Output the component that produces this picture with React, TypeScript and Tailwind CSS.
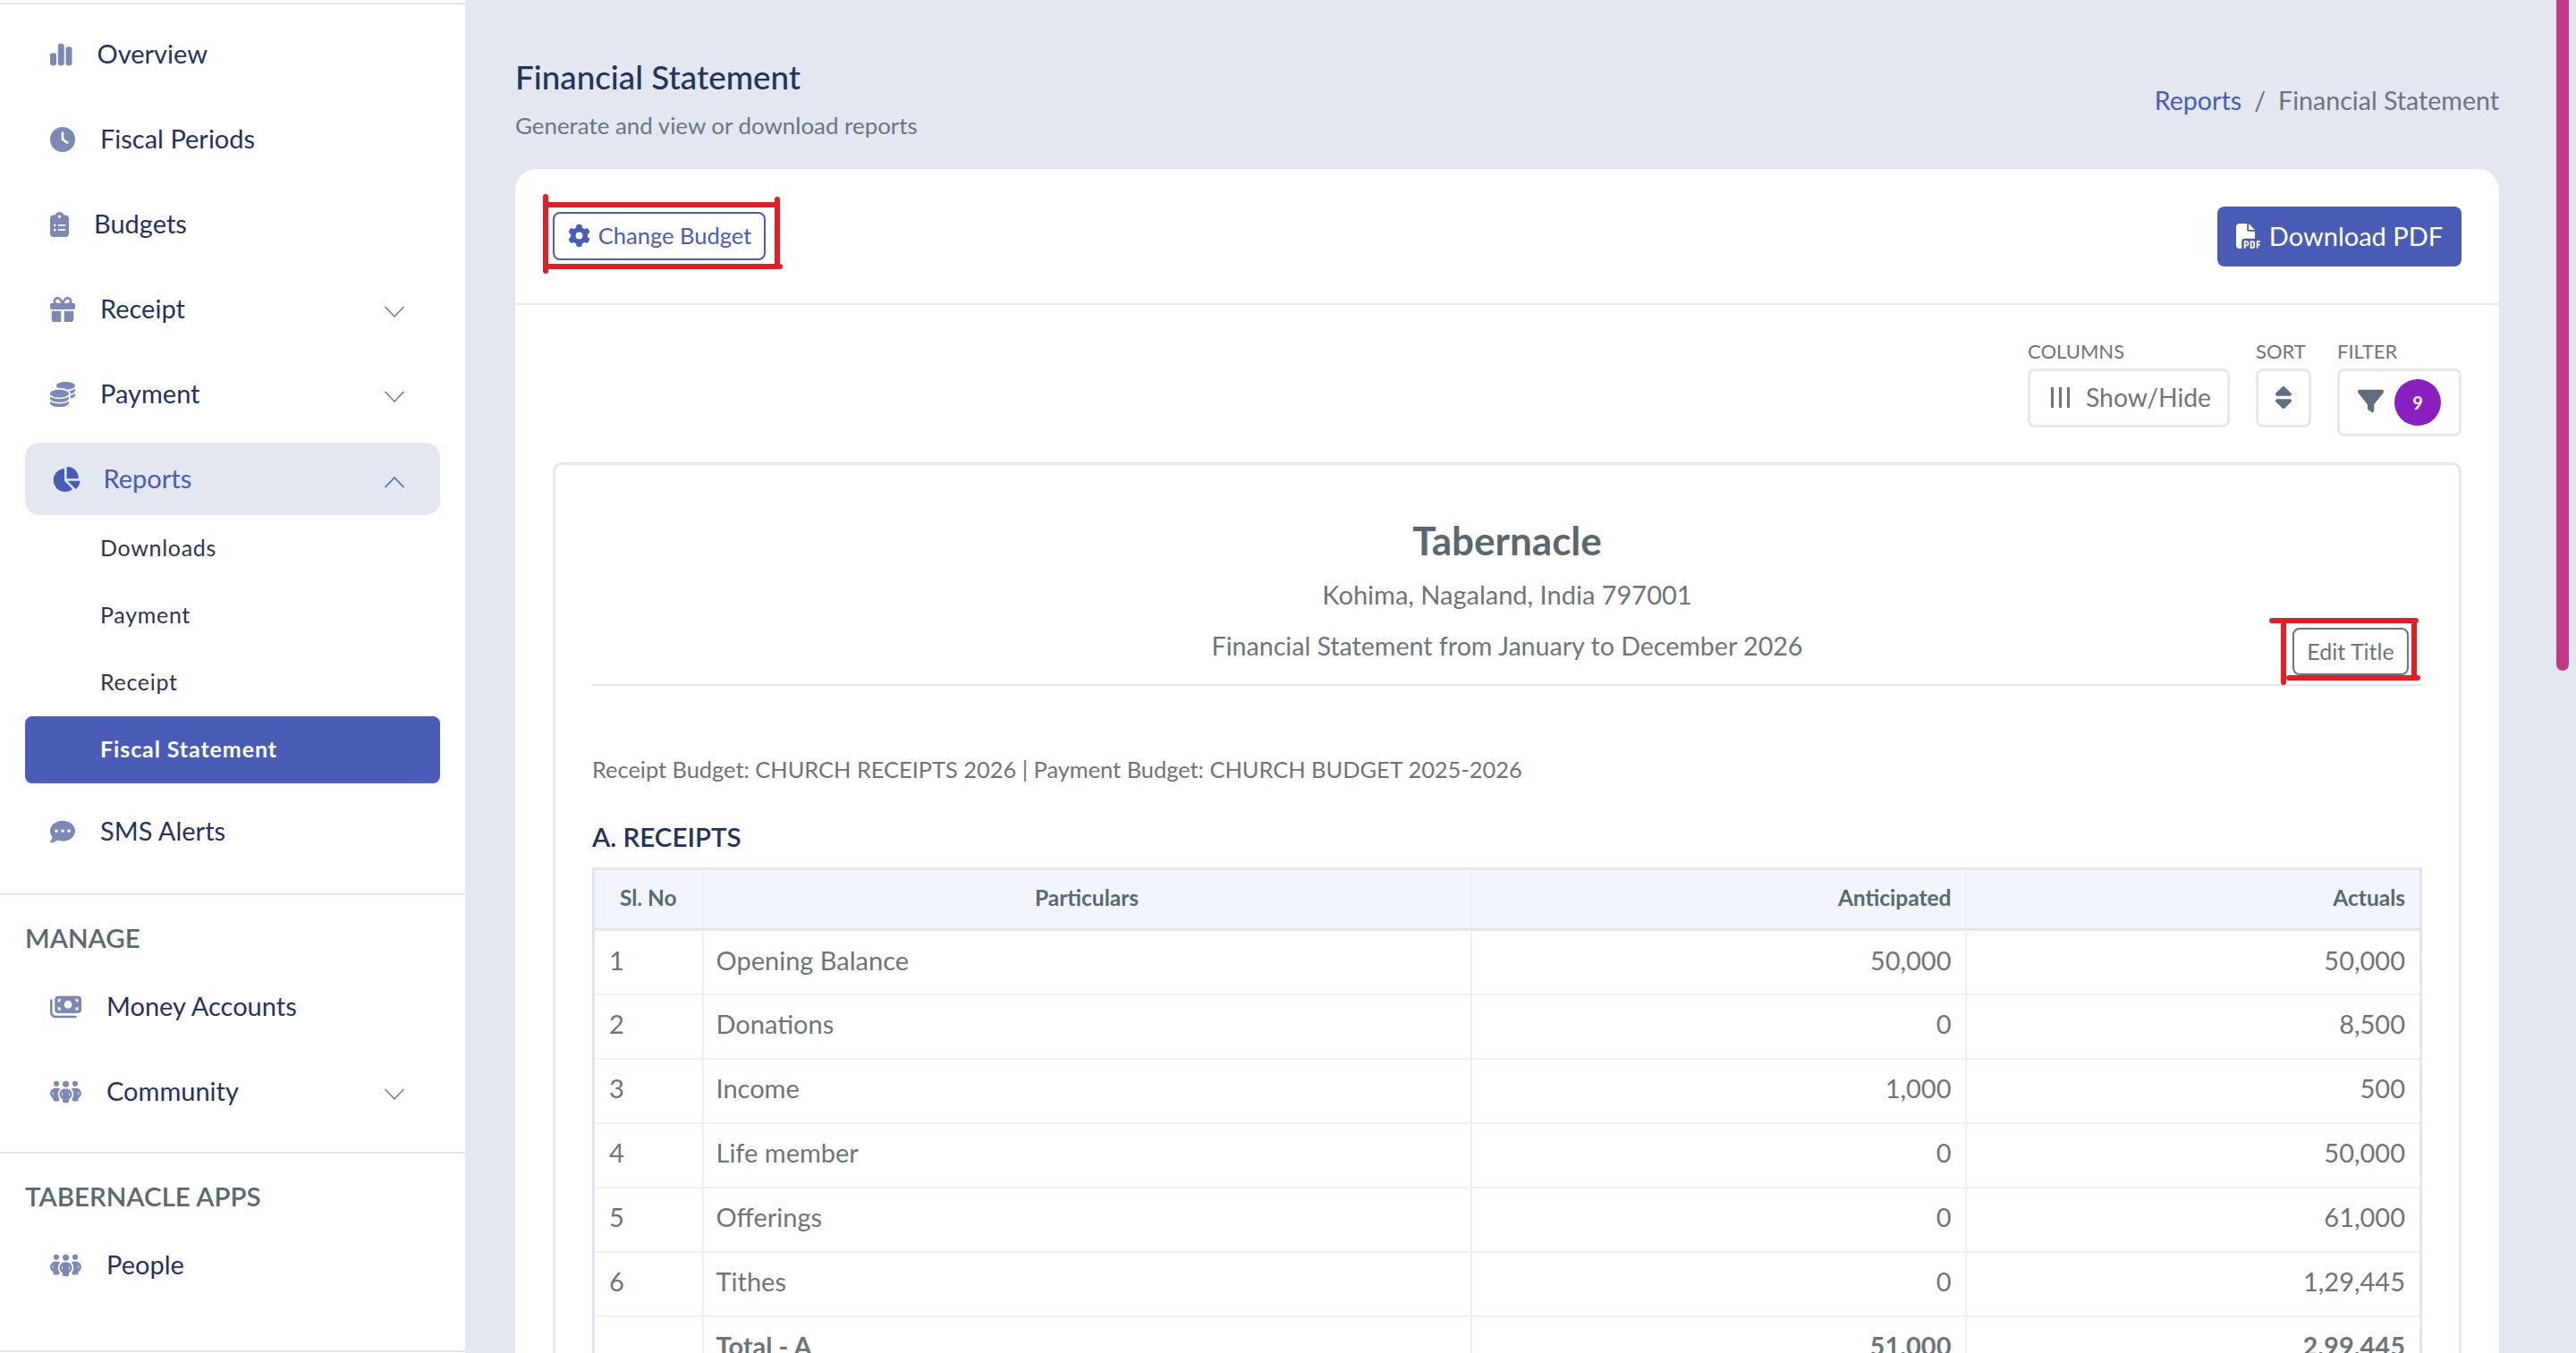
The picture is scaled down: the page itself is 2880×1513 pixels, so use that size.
import React from "react";
import { FaChartSimple, FaClock, FaClipboardList, FaGift, FaCoins, FaChartPie, FaCommentDots, FaMoneyBills, FaPeopleGroup, FaGear, FaFilePdf, FaFilter, FaSort } from "react-icons/fa6";

const Chevron = ({ up = false, color = "#6f7680" }: { up?: boolean; color?: string }) => (
  <svg width="24" height="14" viewBox="0 0 24 14" fill="none" className="mt-[7px]">
    <path d={up ? "M1.5 13 L12 2 L22.5 13" : "M1.5 1 L12 12 L22.5 1"} stroke={color} strokeWidth="1.5" />
  </svg>
);

type Item = { icon: React.ComponentType<{ className?: string }>; label: string; chevron?: boolean; iconW: string };

const NavRow = ({ icon: Icon, label, chevron, iconW }: Item) => (
  <div className="flex items-center h-[81px] mb-[14px] mx-[28px] px-[28px] text-[#24325f] text-[29px]">
    <Icon className={`h-[28px] ${iconW} text-[#7d89b5] shrink-0`} />
    <span className="ml-[28px] flex-1 pb-[2px]">{label}</span>
    {chevron && <span className="mr-[11px]"><Chevron /></span>}
  </div>
);

const Sub = ({ label, active }: { label: string; active?: boolean }) => (
  <div className={`flex items-center h-[75px] mx-[28px] pl-[84px] pb-[2px] text-[25px] rounded-[8px] ${active ? "bg-[#4a5cb5] text-white font-bold tracking-[0.9px]" : "text-[#2c3553] tracking-[0.7px]"}`}>
    {label}
  </div>
);

const SectionLabel = ({ label }: { label: string }) => (
  <div className="h-[36px] leading-[36px] mx-[28px] text-[#5a6872] text-[29.5px] font-semibold">{label}</div>
);

const Sidebar = () => (
  <aside className="w-[520px] shrink-0 h-[1513px] bg-white overflow-hidden">
    <div className="h-[3px]" />
    <div className="border-t-[2px] border-[#e2e6ec] pt-[15px]">
      <NavRow icon={FaChartSimple} iconW="w-[24.5px]" label="Overview" />
      <NavRow icon={FaClock} iconW="w-[28px]" label="Fiscal Periods" />
      <NavRow icon={FaClipboardList} iconW="w-[21px]" label="Budgets" />
      <NavRow icon={FaGift} iconW="w-[28px]" label="Receipt" chevron />
      <NavRow icon={FaCoins} iconW="w-[28px]" label="Payment" chevron />
      <div className="flex items-center h-[81px] mx-[28px] pl-[30px] rounded-[16px] bg-[#e2e7f0] text-[#4a5cb5] text-[29px]">
        <FaChartPie className="h-[28px] w-[31.5px] shrink-0" />
        <span className="ml-[26px] flex-1 pb-[2px]">Reports</span>
        <span className="mr-[39px]"><Chevron up color="#4a5cb5" /></span>
      </div>
      <Sub label="Downloads" />
      <Sub label="Payment" />
      <Sub label="Receipt" />
      <Sub label="Fiscal Statement" active />
      <div className="h-[13px]" />
      <NavRow icon={FaCommentDots} iconW="w-[28px]" label="SMS Alerts" />
    </div>
    <div className="mt-[29px] border-t-[2px] border-[#e2e6ec] pt-[30px]">
      <SectionLabel label="MANAGE" />
      <div className="h-[18px]" />
      <NavRow icon={FaMoneyBills} iconW="w-[35px]" label="Money Accounts" />
      <NavRow icon={FaPeopleGroup} iconW="w-[35px]" label="Community" chevron />
    </div>
    <div className="mt-[27px] border-t-[2px] border-[#e2e6ec] pt-[30px]">
      <SectionLabel label="TABERNACLE APPS" />
      <div className="h-[18px]" />
      <NavRow icon={FaPeopleGroup} iconW="w-[35px]" label="People" />
    </div>
    <div className="mt-[55px] border-t-[2px] border-[#e2e6ec]" />
  </aside>
);

const RedBox = ({ w, h, d, className }: { w: number; h: number; d: string; className: string }) => (
  <svg width={w} height={h} viewBox={`0 0 ${w} ${h}`} fill="none" className={`absolute pointer-events-none ${className}`}>
    <path d={d} stroke="#e01f26" strokeWidth="6" strokeLinecap="round" />
  </svg>
);

const rows = [
  ["1", "Opening Balance", "50,000", "50,000"],
  ["2", "Donations", "0", "8,500"],
  ["3", "Income", "1,000", "500"],
  ["4", "Life member", "0", "50,000"],
  ["5", "Offerings", "0", "61,000"],
  ["6", "Tithes", "0", "1,29,445"],
];

const Table = () => (
  <table className="w-[2046px] table-fixed border-collapse border-[3px] border-[#e3e6ea] text-[#6c757d] text-[29px]">
    <colgroup>
      <col className="w-[122px]" />
      <col className="w-[859px]" />
      <col className="w-[553px]" />
      <col />
    </colgroup>
    <thead>
      <tr className="h-[68px] bg-[#f2f6fc] text-[#5a6872] text-[24.5px] border-b-[3px] border-[#e3e6ea]">
        <th className="pb-[3px] font-bold border-r-[2px] border-[#eef0f3]">Sl. No</th>
        <th className="pb-[3px] font-bold border-r-[2px] border-[#eef0f3]">Particulars</th>
        <th className="pb-[3px] font-bold text-right pr-[15px] border-r-[2px] border-[#eef0f3]">Anticipated</th>
        <th className="pb-[3px] font-bold text-right pr-[16px]">Actuals</th>
      </tr>
    </thead>
    <tbody>
      {rows.map((r) => (
        <tr key={r[0]} className="h-[72px] border-b-[2px] border-[#eef0f3]">
          <td className="pb-[5px] pl-[16px] border-r-[2px] border-[#eef0f3]">{r[0]}</td>
          <td className="pb-[5px] pl-[14px] border-r-[2px] border-[#eef0f3]">{r[1]}</td>
          <td className="pb-[5px] text-right pr-[15px] border-r-[2px] border-[#eef0f3]">{r[2]}</td>
          <td className="pb-[5px] text-right pr-[16px]">{r[3]}</td>
        </tr>
      ))}
      <tr className="h-[72px] font-bold">
        <td className="border-r-[2px] border-[#eef0f3]" />
        <td className="pb-[5px] pl-[14px] border-r-[2px] border-[#eef0f3]">Total - A</td>
        <td className="pb-[5px] text-right pr-[15px] border-r-[2px] border-[#eef0f3]">51,000</td>
        <td className="pb-[5px] text-right pr-[16px]">2,99,445</td>
      </tr>
    </tbody>
  </table>
);

const Main = () => (
  <main className="flex-1 h-[1513px] overflow-hidden bg-[#e2e7f0] pl-[56px] pr-[64px]">
    <div className="flex items-center justify-between pt-[65px] pb-[31px]">
      <div>
        <h1 className="text-[36.8px] leading-[42px] text-[#24325f] font-medium">Financial Statement</h1>
        <p className="mt-[15px] text-[25.9px] leading-[36px] text-[#6c757d]">Generate and view or download reports</p>
      </div>
      <div className="text-[28.6px] text-[#6c757d] pt-[1px]">
        <span className="text-[#4a5cb5]">Reports</span>
        <span className="mx-[14px]">/</span>
        <span>Financial Statement</span>
      </div>
    </div>
    <section className="bg-white rounded-[24px] h-[1400px]">
      <div className="h-[152px] px-[42px] flex items-center justify-between border-b-[2px] border-[#e6e8ec]">
        <div className="relative">
          <button className="w-[238px] h-[54px] flex items-center justify-center gap-[9px] pb-[1px] pl-[1px] rounded-[8px] border-[2px] border-[#4a5cb5] text-[#4a5cb5] text-[25.5px]">
            <FaGear className="text-[25px]" />
            Change Budget
          </button>
          <RedBox w={280} h={90} className="-left-[11px] -top-[20px]" d="M3 3 L3 86 M3 12 L261 12 M262 6 L262 81 M3 81 L265 81" />
        </div>
        <button className="w-[273px] h-[67px] flex items-center justify-center gap-[9px] rounded-[8px] bg-[#4a5cb5] text-white text-[29px]">
          <FaFilePdf className="text-[28px]" />
          Download PDF
        </button>
      </div>
      <div className="px-[42px] pt-[38px]">
        <div className="flex justify-end items-start gap-[29px] text-[#6c757d]">
          <div>
            <div className="h-[28px] leading-[28px] mb-[5px] text-[22px]">COLUMNS</div>
            <div className="w-[226px] h-[66px] flex items-center pl-[23px] gap-[18px] pb-[2px] border-[3px] border-[#e6e8ec] rounded-[8px] text-[28.3px]">
              <svg width="21" height="23" viewBox="0 0 21 23" fill="#6c757d"><rect x="0" width="3" height="23" /><rect x="9" width="3" height="23" /><rect x="18" width="3" height="23" /></svg>
              Show/Hide
            </div>
          </div>
          <div>
            <div className="h-[28px] leading-[28px] mb-[5px] text-[22px]">SORT</div>
            <div className="w-[62px] h-[66px] flex items-center justify-center pb-[2px] border-[3px] border-[#e6e8ec] rounded-[8px]">
              <FaSort className="h-[29px] w-[18px] text-[#5f6d7c]" />
            </div>
          </div>
          <div>
            <div className="h-[28px] leading-[28px] mb-[5px] text-[22px]">FILTER</div>
            <div className="w-[139px] h-[76px] flex items-center pl-[20px] gap-[12px] border-[3px] border-[#e6e8ec] rounded-[8px]">
              <FaFilter className="text-[29px] mb-[4px] text-[#5f6d7c]" />
              <span className="w-[52px] h-[52px] rounded-full bg-[#8a1fbf] text-white text-[20px] font-bold flex items-center justify-center">9</span>
            </div>
          </div>
        </div>
        <div className="mt-[29px] border-[3px] border-[#e6e8ec] rounded-[10px] px-[41px] pt-[60px] h-[1200px] text-[#6c757d]">
          <div className="relative text-center border-b-[2px] border-[#e3e6ea] pb-[26px]">
            <div className="text-[44px] leading-[48px] pb-[2px] font-bold text-[#5a6872]">Tabernacle</div>
            <div className="mt-[18px] text-[29px] leading-[34px]">Kohima, Nagaland, India 797001</div>
            <div className="mt-[23px] text-[28.6px] leading-[34px]">Financial Statement from January to December 2026</div>
            <button className="absolute right-[15px] bottom-[10px] w-[130px] h-[53px] rounded-[8px] border-[2px] border-[#6c757d] bg-white text-[25px] text-[#6c757d]">Edit Title</button>
            <RedBox w={175} h={80} className="right-[-3px] bottom-[-3px]" d="M4 6 L165 6 M17 6 L17 75 M163 6 L163 70 M23 70 L167 70" />
          </div>
          <p className="mt-[76px] text-[25.4px] leading-[34px]">Receipt Budget: CHURCH RECEIPTS 2026 | Payment Budget: CHURCH BUDGET 2025-2026</p>
          <h2 className="mt-[41px] mb-[16px] text-[29.5px] leading-[36px] font-semibold text-[#24325f]">A. RECEIPTS</h2>
          <Table />
        </div>
      </div>
    </section>
  </main>
);

export default function App() {
  return (
    <div className="flex w-[2880px] h-[1513px] overflow-hidden font-['Lato',sans-serif]">
      <Sidebar />
      <Main />
      <div className="w-[22px] h-[1513px] bg-[#e2e7f0] shrink-0">
        <div className="w-[14px] h-[750px] rounded-b-[7px] bg-[#be3a85]" />
      </div>
    </div>
  );
}
